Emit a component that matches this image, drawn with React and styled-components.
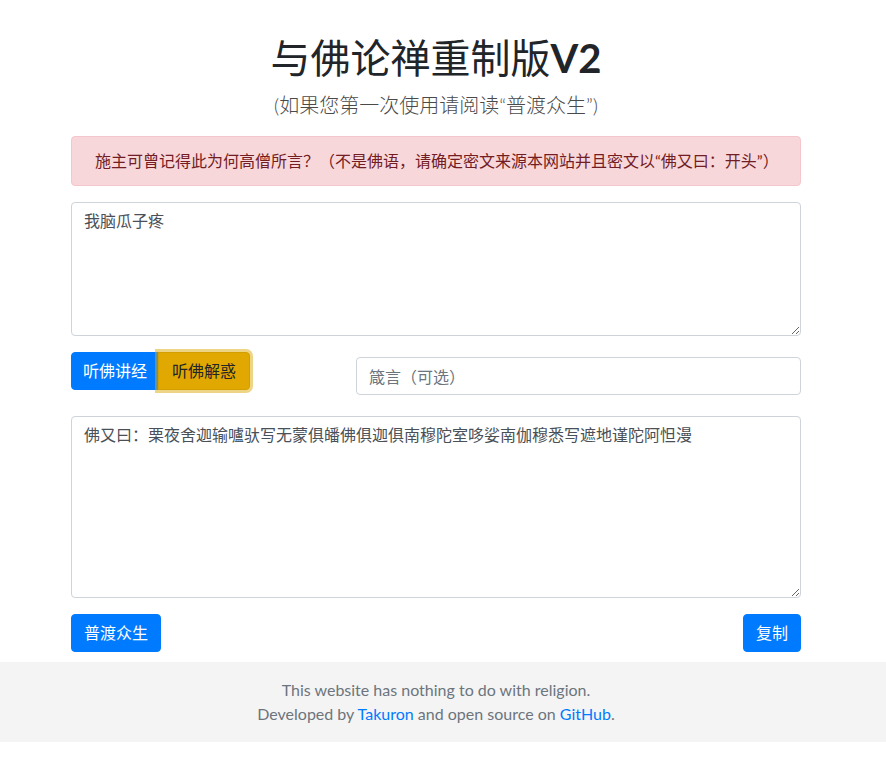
import styled, { createGlobalStyle, css } from "styled-components";

const GlobalStyle = createGlobalStyle`
  html, body {
    margin: 0;
    padding: 0;
    background: #fff;
  }
  body {
    font-family: Lato, "Noto Sans CJK SC", sans-serif;
    font-size: 16px;
    line-height: 1.5;
    color: #212529;
  }
  * { box-sizing: border-box; }
`;

const Page = styled.div`
  display: flex;
  flex-direction: column;
`;

const Main = styled.main`
  padding-right: 14px;
`;

const Container = styled.div`
  width: 730px;
  margin: 0 auto;
`;

const Title = styled.h1`
  margin: 0 0 8px;
  padding-top: 34px;
  font-size: 40px;
  line-height: 1.2;
  font-weight: 400;
  text-align: center;
  color: #212529;
  b { font-weight: 700; }
`;

const Lead = styled.p`
  margin: 0 0 16px;
  font-size: 20px;
  line-height: 1.5;
  font-weight: 300;
  text-align: center;
  color: #4a4a4a;
`;

const Alert = styled.div`
  padding: 12px 20px 12px 23px;
  margin-bottom: 16px;
  background: #f8d7da;
  border: 1px solid #f5c6cb;
  border-radius: 4px;
  color: #721c24;
`;

const TextArea = styled.textarea`
  display: block;
  width: 100%;
  padding: 6px 12px;
  font: inherit;
  font-size: 16px;
  line-height: 1.5;
  color: #495057;
  background: #fff;
  border: 1px solid #ced4da;
  border-radius: 4px;
  resize: vertical;
  outline: none;
`;

const Controls = styled.div`
  display: flex;
  align-items: flex-start;
  justify-content: space-between;
  margin: 16px 0;
`;

const Group = styled.div`
  display: flex;
`;

const Button = styled.button`
  font: inherit;
  font-size: 16px;
  line-height: 24px;
  height: 38px;
  padding: 0 12px;
  border: 1px solid #007bff;
  border-radius: 4px;
  background: #007bff;
  color: #fff;
  cursor: pointer;
  ${(p) => p.$left && css`
    padding: 0 11px;
    border-radius: 4px 0 0 4px;
  `}
  ${(p) => p.$warning && css`
    position: relative;
    margin-left: -1px;
    padding: 0 13px;
    border-radius: 0 4px 4px 0;
    background: #e0a800;
    border-color: #d39e00;
    color: #212529;
    box-shadow: 0 0 0 3px rgba(222, 170, 12, 0.5);
  `}
`;

const Input = styled.input`
  width: 445px;
  height: 38px;
  margin: 5px 0;
  padding: 6px 12px;
  font: inherit;
  font-size: 16px;
  color: #495057;
  border: 1px solid #ced4da;
  border-radius: 4px;
  outline: none;
  &::placeholder { color: #6c757d; }
`;

const Actions = styled.div`
  display: flex;
  justify-content: space-between;
  margin: 16px 0 10px;
`;

const Footer = styled.footer`
  background: #f4f4f4;
  padding: 16px 14px 16px 0;
  text-align: center;
  color: #6c757d;
  a {
    color: #007bff;
    text-decoration: none;
  }
`;

const Line = styled.div`
  line-height: 24px;
`;

export default function App() {
  return (
    <Page>
      <GlobalStyle />
      <Main>
        <Container>
          <Title>与佛论禅重制版<b>V2</b></Title>
          <Lead>(如果您第一次使用请阅读“普渡众生”)</Lead>
          <Alert>施主可曾记得此为何高僧所言？（不是佛语，请确定密文来源本网站并且密文以“佛又曰：开头”）</Alert>
          <TextArea rows={5} defaultValue="我脑瓜子疼" />
          <Controls>
            <Group>
              <Button $left>听佛讲经</Button>
              <Button $warning>听佛解惑</Button>
            </Group>
            <Input placeholder="箴言（可选）" />
          </Controls>
          <TextArea rows={7} defaultValue="佛又曰：栗夜舍迦输嚧驮写无蒙俱皤佛俱迦俱南穆陀室哆娑南伽穆悉写遮地谨陀阿怛漫" />
          <Actions>
            <Button>普渡众生</Button>
            <Button>复制</Button>
          </Actions>
        </Container>
      </Main>
      <Footer>
        <Line>This website has nothing to do with religion.</Line>
        <Line>
          Developed by <a href="#">Takuron</a> and open source on <a href="#">GitHub</a>.
        </Line>
      </Footer>
    </Page>
  );
}
